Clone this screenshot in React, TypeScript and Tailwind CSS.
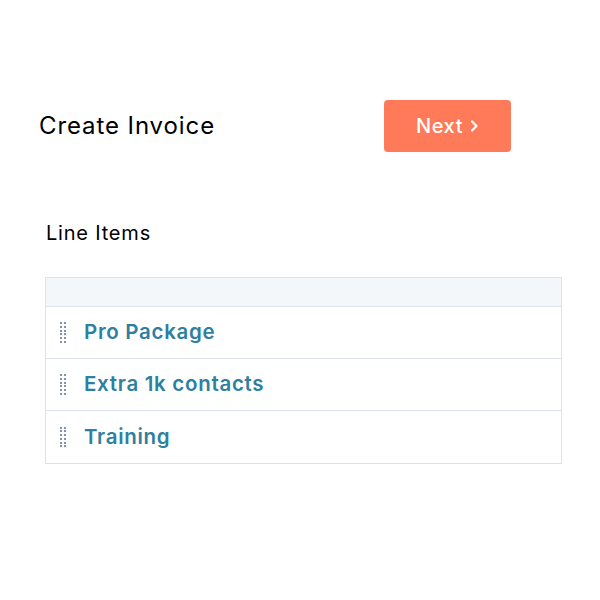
const items = ["Pro Package", "Extra 1k contacts", "Training"];

function DragHandle() {
  return (
    <div className="grid grid-cols-2 gap-x-[2px] gap-y-[1.8px] w-[6px]">
      {Array.from({ length: 12 }).map((_, i) => (
        <span key={i} className="block w-[2px] h-[2px] bg-[#8092ad]" />
      ))}
    </div>
  );
}

export default function App() {
  return (
    <div className="w-[600px] h-[600px] bg-white font-['Inter',sans-serif]">
      <div className="flex items-center pt-[100px] pl-[39px]">
        <h1 className="text-[24px] tracking-[0.9px] text-black leading-none w-[345px]">Create Invoice</h1>
        <button className="w-[127px] h-[52px] rounded-[4px] bg-[#ff7a59] text-white text-[20px] tracking-[0.6px] font-medium flex items-center justify-center gap-[7px]">
          Next
          <svg width="9" height="14" viewBox="0 0 9 14" fill="none">
            <path d="M2 2.5 L6.5 7 L2 11.5" stroke="white" strokeWidth="2.2" strokeLinecap="round" strokeLinejoin="round" />
          </svg>
        </button>
      </div>

      <p className="mt-[71px] ml-[46px] text-[20px] tracking-[0.8px] text-black leading-none">Line Items</p>

      <div className="mt-[34px] ml-[45px] w-[517px] border-[1.5px] border-[#dde2ee]">
        <div className="h-[29px] bg-[#f4f7fa] border-b-[1.5px] border-[#dde2ee]" />
        {items.map((name, i) => (
          <div
            key={name}
            className={`h-[52px] flex items-center pl-[14px] ${i < items.length - 1 ? "border-b-[1.5px] border-[#dde2ee]" : ""}`}
          >
            <DragHandle />
            <span className="ml-[18px] text-[20.5px] tracking-[0.7px] font-semibold text-[#2f7f9f] leading-none">{name}</span>
          </div>
        ))}
      </div>
    </div>
  );
}
